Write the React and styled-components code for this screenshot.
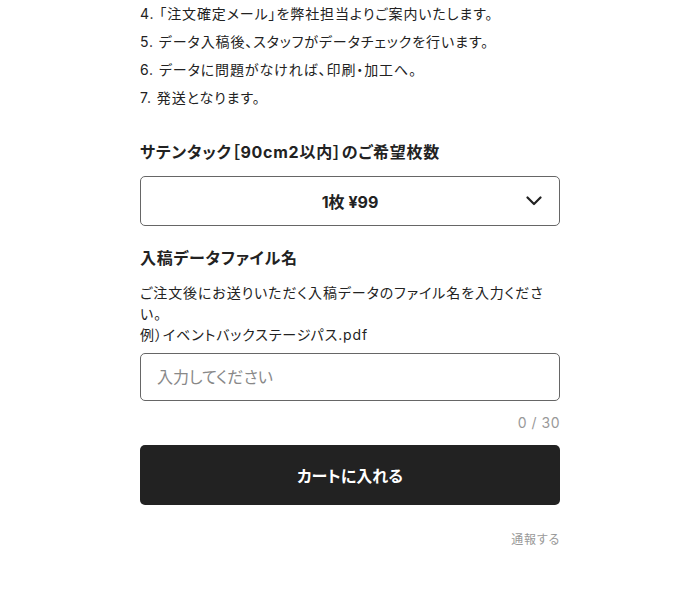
import React from "react";
import styled, { createGlobalStyle } from "styled-components";

const Global = createGlobalStyle`
  html, body { margin: 0; padding: 0; background: #fff; }
  body {
    font-family: Inter, "Noto Sans CJK JP", sans-serif;
    color: #222;
    font-feature-settings: "palt";
    -webkit-font-smoothing: antialiased;
  }
  * { box-sizing: border-box; }
`;

const Page = styled.div`
  width: 420px;
  margin-left: 140px;
  display: flex;
  flex-direction: column;
`;

const Steps = styled.ol`
  list-style: none;
  margin: 0;
  padding: 0;
`;

const Step = styled.li`
  font-size: 14px;
  line-height: 28px;
  letter-spacing: 0.9px;
  color: #222;
`;

const Heading = styled.h3`
  margin: ${(p) => p.$top}px 0 0;
  font-size: 16px;
  line-height: 24px;
  font-weight: 700;
  letter-spacing: 0.75px;
  color: #222;
`;

const SelectBox = styled.div`
  position: relative;
  margin-top: 12px;
  height: 50px;
  border: 1px solid #666;
  border-radius: 5px;
  display: flex;
  align-items: center;
  justify-content: center;
  font-size: 16px;
  font-weight: 700;
  color: #222;
`;

const Chevron = styled.svg`
  position: absolute;
  right: 17px;
  top: 50%;
  transform: translateY(-50%);
`;

const Description = styled.p`
  margin: 12px 0 0;
  font-size: 14px;
  line-height: 21px;
  letter-spacing: 0.9px;
  color: #222;
`;

const TextInput = styled.input`
  margin-top: 8px;
  height: 48px;
  width: 100%;
  border: 1px solid #666;
  border-radius: 5px;
  padding: 0 16px;
  font-family: inherit;
  font-feature-settings: "palt";
  font-size: 16px;
  color: #222;
  outline: none;
  &::placeholder { color: #888; }
`;

const Counter = styled.div`
  margin-top: 12px;
  text-align: right;
  font-size: 14px;
  line-height: 20px;
  color: #999;
  letter-spacing: 0.5px;
`;

const CartButton = styled.button`
  margin-top: 12px;
  height: 60px;
  width: 100%;
  border: none;
  border-radius: 5px;
  background: #222;
  color: #fff;
  font-family: inherit;
  font-feature-settings: "palt";
  font-size: 16px;
  font-weight: 700;
`;

const Report = styled.a`
  align-self: flex-end;
  margin-top: 27px;
  font-size: 12px;
  line-height: 16px;
  letter-spacing: 0.8px;
  color: #999;
  text-decoration: none;
`;

export default function App() {
  return (
    <>
      <Global />
      <Page>
        <Steps>
          <Step>4. 「注文確定メール」を弊社担当よりご案内いたします。</Step>
          <Step>5. データ入稿後、スタッフがデータチェックを行います。</Step>
          <Step>6. データに問題がなければ、印刷・加工へ。</Step>
          <Step>7. 発送となります。</Step>
        </Steps>
        <Heading $top={28}>サテンタック［90cm2以内］のご希望枚数</Heading>
        <SelectBox>
          1枚 ¥99
          <Chevron width="16" height="10" viewBox="0 0 16 10" fill="none">
            <path d="M1.5 1.5 L8 8 L14.5 1.5" stroke="#222" strokeWidth="2.2" strokeLinecap="round" strokeLinejoin="round" />
          </Chevron>
        </SelectBox>
        <Heading $top={20}>入稿データファイル名</Heading>
        <Description>
          ご注文後にお送りいただく入稿データのファイル名を入力ください。
          <br />
          例）イベントバックステージパス.pdf
        </Description>
        <TextInput placeholder="入力してください" />
        <Counter>0 / 30</Counter>
        <CartButton>カートに入れる</CartButton>
        <Report href="#">通報する</Report>
      </Page>
    </>
  );
}
